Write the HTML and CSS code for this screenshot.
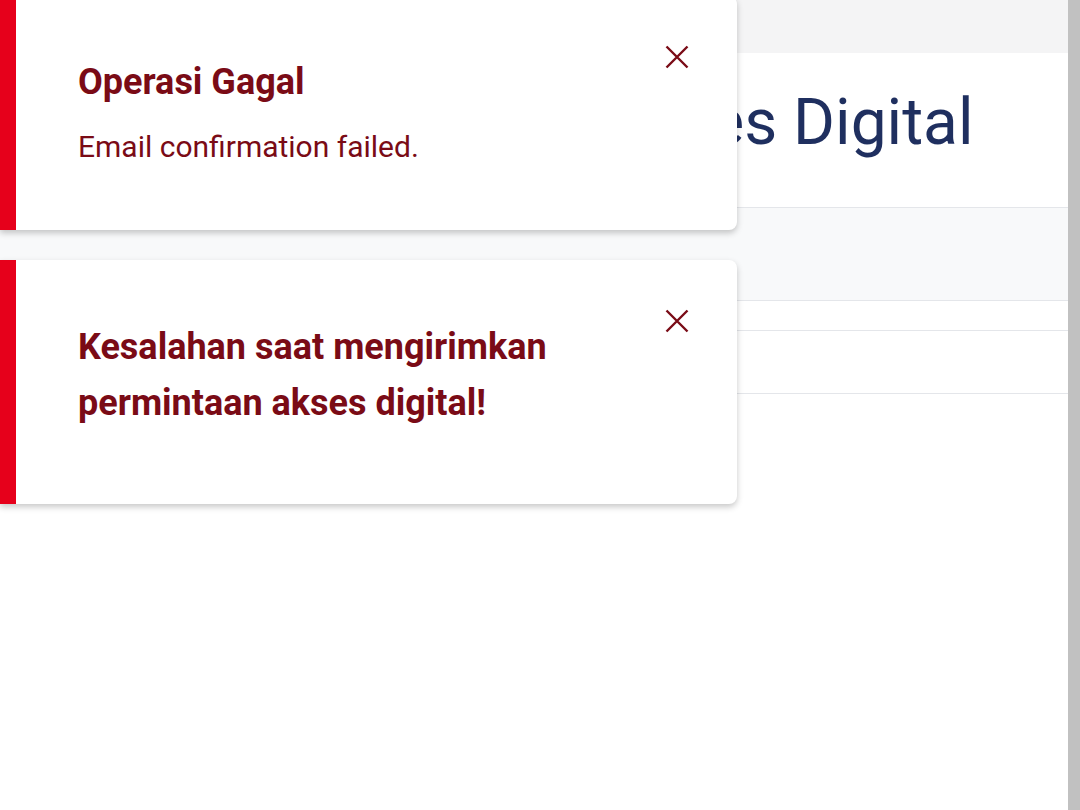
FILE: index.html
```html
<!DOCTYPE html>
<html lang="id">
<head>
<meta charset="utf-8">
<title>Akses Digital</title>
<link rel="stylesheet" href="styles.css">
</head>
<body>
<div class="viewport">
  <main class="page">
    <div class="topbar"></div>
    <header class="header">
      <h1 class="page-title">Akses Digital</h1>
    </header>
    <div class="band"></div>
    <div class="row row-thin"></div>
    <div class="row row-mid"></div>
  </main>
  <div class="scrollbar"></div>

  <div class="toasts">
    <div class="toast">
      <div class="toast-content">
        <div class="toast-title">Operasi Gagal</div>
        <div class="toast-msg">Email confirmation failed.</div>
      </div>
      <button class="toast-close" aria-label="Tutup">
        <svg viewBox="0 0 24 24" width="24" height="24"><path d="M1.5 1.5 L22.5 22.5 M22.5 1.5 L1.5 22.5" stroke="currentColor" stroke-width="2.4" fill="none"/></svg>
      </button>
    </div>
    <div class="toast toast-long">
      <div class="toast-content">
        <div class="toast-title">Kesalahan saat mengirimkan permintaan akses digital!</div>
      </div>
      <button class="toast-close" aria-label="Tutup">
        <svg viewBox="0 0 24 24" width="24" height="24"><path d="M1.5 1.5 L22.5 22.5 M22.5 1.5 L1.5 22.5" stroke="currentColor" stroke-width="2.4" fill="none"/></svg>
      </button>
    </div>
  </div>
</div>
</body>
</html>
```

FILE: styles.css
```css
* { box-sizing: border-box; }
html, body { margin: 0; padding: 0; }
body {
  font-family: Roboto, "Liberation Sans", Arial, sans-serif;
  background: #ffffff;
  width: 1080px;
  height: 810px;
  overflow: hidden;
}
.viewport {
  position: relative;
  display: flex;
  width: 1080px;
  height: 810px;
}
.page {
  flex: 1;
  display: flex;
  flex-direction: column;
  background: #ffffff;
}
.topbar {
  height: 53px;
  background: #f4f4f5;
}
.header {
  height: 155px;
  padding-top: 32px;
  padding-left: 603px;
  border-bottom: 1px solid #e4e6ea;
  background: #ffffff;
}
.page-title {
  margin: 0;
  font-size: 64px;
  font-weight: 400;
  line-height: 75px;
  color: #1f2f5f;
  white-space: nowrap;
}
.band {
  height: 93px;
  background: #f8f9fa;
  border-bottom: 1px solid #e4e6ea;
}
.row { border-bottom: 1px solid #e4e6ea; }
.row-thin { height: 30px; }
.row-mid { height: 63px; }
.scrollbar {
  width: 12px;
  background: #c1c1c1;
}
.toasts {
  position: absolute;
  left: 0;
  top: -4px;
  width: 737px;
  display: flex;
  flex-direction: column;
  gap: 30px;
}
.toast {
  display: flex;
  align-items: flex-start;
  background: #ffffff;
  border-left: 16px solid #e6001b;
  border-radius: 0 8px 8px 0;
  box-shadow: 0 3px 6px rgba(0, 0, 0, 0.22);
  padding: 58px 48px 63px 62px;
}
.toast-long { padding-top: 59px; padding-bottom: 73px; }
.toast-long .toast-close { margin-top: -10px; }
.toast-content { flex: 1; padding-right: 40px; }
.toast-title {
  font-size: 36px;
  font-weight: 700;
  line-height: 56px;
  color: #7a0b16;
}
.toast-msg {
  margin-top: 17px;
  font-size: 30px;
  line-height: 40px;
  color: #7a0b16;
}
.toast-close {
  margin-top: -9px;
  width: 24px;
  height: 24px;
  padding: 0;
  border: 0;
  background: none;
  color: #7a0b16;
  cursor: pointer;
  display: flex;
  flex-shrink: 0;
}
```
